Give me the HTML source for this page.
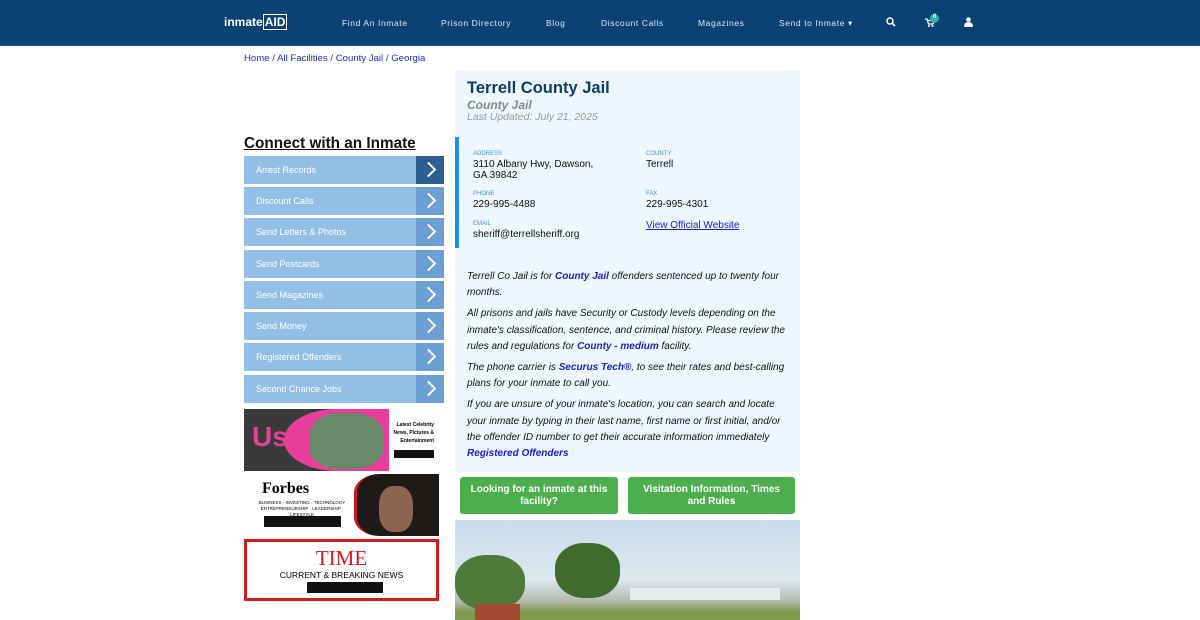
<!DOCTYPE html>
<html><head><meta charset="utf-8"><style>
*{margin:0;padding:0;box-sizing:border-box}
body{width:1200px;height:620px;overflow:hidden;background:#fff;font-family:"Liberation Sans",sans-serif;position:relative}
.nav{position:absolute;top:0;left:0;width:1200px;height:46px;background:#0b4275;border-bottom:1px solid #1a5a90}
.nav span{position:absolute;top:18px;color:#dfe7f0;font-size:8.5px;letter-spacing:.6px}
.logo{position:absolute;left:224px;top:15px;color:#fff;font-weight:bold;font-size:12px}
.bc{position:absolute;left:244px;top:53px;font-size:9.6px;color:#333}
.bc a{text-decoration:none;color:#1530c0}
h2{position:absolute;left:244px;top:135px;font-size:15.3px;text-decoration:underline;color:#111}
.menu{position:absolute;left:244px;width:200px;height:28px;background:#93bfe7;color:#fff;font-size:9px}
.menu span{position:absolute;left:12px;top:9px}
.menu i{position:absolute;right:0;top:0;width:28px;height:28px;background:#6c9fd3}
.menu i:after{content:"";position:absolute;left:7px;top:8px;width:9px;height:9px;border-top:2px solid #fff;border-right:2px solid #fff;transform:rotate(45deg)}
.menu.first i{background:#2f5f92}
.panel{position:absolute;left:455px;top:70px;width:345px;height:402px;background:#eef7fe}
.panel h1{position:absolute;left:12px;top:9px;font-size:16.5px;color:#0f3b67}
.sub{position:absolute;left:12px;font-style:italic;color:#888}
.info{position:absolute;left:0;top:67px;width:345px;height:111px;border-left:4px solid #1e8fe6}
.lab{position:absolute;font-size:6px;color:#3b94e0}
.val{position:absolute;font-size:10px;color:#111;line-height:11px}
.txt{position:absolute;left:12px;top:199px;width:325px;font-size:10px;font-style:italic;color:#111;line-height:16.2px}
.txt p{margin-bottom:5px}
.txt b{color:#1a21c8}
.btn{position:absolute;top:477px;height:37px;background:#4cae4c;border-radius:3px;color:#fff;font-weight:bold;font-size:10px;text-align:center;padding:7px 8px 0;line-height:12px}
.ad{position:absolute;left:244px;width:195px}
</style></head><body>
<div class="nav">
<div class="logo">inmate<span style="position:static;font-size:12px;color:#fff;letter-spacing:0;border:1px solid #fff;padding:0 1px">AID</span></div>
<span style="left:342px">Find An Inmate</span><span style="left:441px">Prison Directory</span><span style="left:546px">Blog</span><span style="left:601px">Discount Calls</span><span style="left:698px">Magazines</span><span style="left:779px">Send to Inmate ▾</span>
<svg style="position:absolute;left:886px;top:17px" width="10" height="10" viewBox="0 0 10 10"><circle cx="4" cy="4" r="3" fill="none" stroke="#fff" stroke-width="1.5"/><path d="M6 6L9 9" stroke="#fff" stroke-width="1.6"/></svg>
<svg style="position:absolute;left:925px;top:18px" width="10" height="9" viewBox="0 0 10 9"><path d="M0 1H2L3.5 6H8L9 2.5H3" fill="none" stroke="#fff" stroke-width="1.3"/><circle cx="4" cy="8" r="1" fill="#fff"/><circle cx="7.5" cy="8" r="1" fill="#fff"/></svg>
<b style="position:absolute;left:930px;top:14px;width:9px;height:9px;border-radius:50%;background:#2bb5a0;color:#fff;font-size:6px;text-align:center">0</b>
<svg style="position:absolute;left:964px;top:17px" width="9" height="10" viewBox="0 0 9 10"><circle cx="4.5" cy="2.5" r="2.3" fill="#fff"/><path d="M0 10 Q0 5 4.5 5 Q9 5 9 10Z" fill="#fff"/></svg>
</div>
<div class="bc"><a>Home</a> / <a>All Facilities</a> / <a>County Jail</a> / <a>Georgia</a></div>
<h2>Connect with an Inmate</h2>
<div class="menu first" style="top:156px"><span>Arrest Records</span><i></i></div>
<div class="menu" style="top:187px"><span>Discount Calls</span><i></i></div>
<div class="menu" style="top:218px"><span>Send Letters &amp; Photos</span><i></i></div>
<div class="menu" style="top:250px"><span>Send Postcards</span><i></i></div>
<div class="menu" style="top:281px"><span>Send Magazines</span><i></i></div>
<div class="menu" style="top:312px"><span>Send Money</span><i></i></div>
<div class="menu" style="top:343px"><span>Registered Offenders</span><i></i></div>
<div class="menu" style="top:375px"><span>Second Chance Jobs</span><i></i></div>
<div class="ad" style="top:409px;height:62px;background:#fff">
<div style="position:absolute;left:0;top:0;width:145px;height:62px;background:#3a3a3a"></div>
<div style="position:absolute;left:40px;top:0;width:105px;height:62px;background:#e8409a;border-radius:50% 0 0 50%"></div>
<div style="position:absolute;left:65px;top:4px;width:75px;height:56px;background:#6a8a6a;border-radius:40%"></div>
<b style="position:absolute;left:8px;top:12px;color:#e8409a;font-size:28px">Us</b>
<div style="position:absolute;left:145px;top:12px;width:45px;font-size:5px;font-weight:bold;text-align:right;line-height:8px">Latest Celebrity News, Pictures &amp; Entertainment</div>
<div style="position:absolute;left:150px;top:41px;width:40px;height:8px;background:#111"></div>
</div>
<div class="ad" style="top:474px;height:62px;background:#fff">
<div style="position:absolute;left:18px;top:6px;font-family:'Liberation Serif',serif;font-weight:bold;font-size:16px">Forbes</div>
<div style="position:absolute;left:8px;top:26px;font-size:4.5px;line-height:6px;text-align:center;width:100px">BUSINESS · INVESTING · TECHNOLOGY<br>ENTREPRENEURSHIP · LEADERSHIP · LIFESTYLE</div>
<div style="position:absolute;left:20px;top:42px;width:77px;height:11px;background:#111"></div>
<div style="position:absolute;left:110px;top:0;width:85px;height:62px;background:#1e1a18;border-left:3px solid #d01a1a;border-radius:30% 0 0 30%"></div>
<div style="position:absolute;left:135px;top:12px;width:34px;height:46px;background:#8a6450;border-radius:40%"></div>
</div>
<div class="ad" style="top:539px;height:62px;border:3px solid #d31d1d">
<div style="position:absolute;left:0;top:4px;width:189px;text-align:center;font-family:'Liberation Serif',serif;color:#d31d1d;font-size:21px">TIME</div>
<div style="position:absolute;left:0;top:28px;width:189px;text-align:center;font-size:8.5px">CURRENT &amp; BREAKING NEWS</div>
<div style="position:absolute;left:60px;top:40px;width:76px;height:11px;background:#111"></div>
</div>
<div class="panel">
<h1>Terrell County Jail</h1>
<div class="sub" style="top:28px;font-size:12px;font-weight:bold">County Jail</div>
<div class="sub" style="top:41px;font-size:10.5px;color:#999">Last Updated: July 21, 2025</div>
<div class="info">
<div class="lab" style="left:14px;top:14px">ADDRESS</div><div class="val" style="left:14px;top:22px">3110 Albany Hwy, Dawson,<br>GA 39842</div>
<div class="lab" style="left:187px;top:14px">COUNTY</div><div class="val" style="left:187px;top:22px">Terrell</div>
<div class="lab" style="left:14px;top:54px">PHONE</div><div class="val" style="left:14px;top:62px">229-995-4488</div>
<div class="lab" style="left:187px;top:54px">FAX</div><div class="val" style="left:187px;top:62px">229-995-4301</div>
<div class="lab" style="left:14px;top:84px">EMAIL</div><div class="val" style="left:14px;top:92px">sheriff@terrellsheriff.org</div>
<div class="val" style="left:187px;top:83px;color:#1a21c8;text-decoration:underline">View Official Website</div>
</div>
<div class="txt">
<p>Terrell Co Jail is for <b>County Jail</b> offenders sentenced up to twenty four months.</p>
<p>All prisons and jails have Security or Custody levels depending on the inmate's classification, sentence, and criminal history. Please review the rules and regulations for <b>County - medium</b> facility.</p>
<p>The phone carrier is <b>Securus Tech®</b>, to see their rates and best-calling plans for your inmate to call you.</p>
<p>If you are unsure of your inmate's location, you can search and locate your inmate by typing in their last name, first name or first initial, and/or the offender ID number to get their accurate information immediately <b>Registered Offenders</b></p>
</div>
</div>
<div class="btn" style="left:460px;width:158px">Looking for an inmate at this facility?</div>
<div class="btn" style="left:628px;width:167px">Visitation Information, Times and Rules</div>
<div style="position:absolute;left:455px;top:520px;width:345px;height:100px;background:linear-gradient(#c9dceb,#dce8ef 60%,#b8bcb4 80%,#7d9a4f 92%)"></div>
<div style="position:absolute;left:455px;top:555px;width:70px;height:55px;background:#4f7a3a;border-radius:45%"></div>
<div style="position:absolute;left:555px;top:543px;width:65px;height:55px;background:#3f6b2e;border-radius:45%"></div>
<div style="position:absolute;left:630px;top:588px;width:150px;height:12px;background:#e8ecec"></div>
<div style="position:absolute;left:475px;top:604px;width:45px;height:16px;background:#a44a32"></div>
</body></html>
